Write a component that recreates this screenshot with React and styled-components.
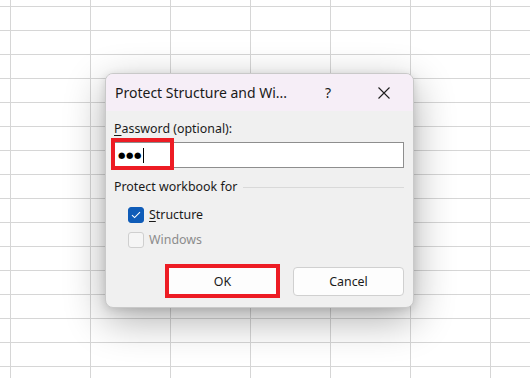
import React from "react";
import styled, { createGlobalStyle } from "styled-components";

const GlobalStyle = createGlobalStyle`
    html, body {
        margin: 0;
        padding: 0;
        background: #ffffff;
    }
    body {
        font-family: "Noto Sans", "Open Sans", sans-serif;
        color: #1b1b1b;
    }
`;

const App = () => {
    return (
        <Sheet>
            <GlobalStyle />
            <Dialog>
                <TitleBar>
                    <Title>Protect Structure and Wi...</Title>
                    <HelpButton>?</HelpButton>
                    <CloseButton>
                        <svg width="12" height="12" viewBox="0 0 12 12">
                            <path
                                d="M0.5 0.5 L11.5 11.5 M11.5 0.5 L0.5 11.5"
                                stroke="#1f1f1f"
                                strokeWidth="1.1"
                                fill="none"
                            />
                        </svg>
                    </CloseButton>
                </TitleBar>
                <Body>
                    <Label>
                        <u>P</u>assword (optional):
                    </Label>
                    <InputWrap>
                        <PasswordInput>
                            <Dots>●●●</Dots>
                            <Caret />
                        </PasswordInput>
                        <Highlight />
                    </InputWrap>
                    <Group>
                        <GroupTitle>Protect workbook for</GroupTitle>
                        <GroupLine />
                    </Group>
                    <CheckRow>
                        <CheckBox checked>
                            <svg width="10" height="8" viewBox="0 0 10 8">
                                <path
                                    d="M1 4.2 L3.6 6.6 L9 1.2"
                                    stroke="#ffffff"
                                    strokeWidth="1.1"
                                    fill="none"
                                />
                            </svg>
                        </CheckBox>
                        <CheckLabel>
                            <u>S</u>tructure
                        </CheckLabel>
                    </CheckRow>
                    <CheckRow disabled>
                        <CheckBox />
                        <CheckLabel disabled>Windows</CheckLabel>
                    </CheckRow>
                    <ButtonRow>
                        <Button highlighted>OK</Button>
                        <Button>Cancel</Button>
                    </ButtonRow>
                </Body>
            </Dialog>
        </Sheet>
    );
};

const Sheet = styled.div`
    position: relative;
    width: 530px;
    height: 378px;
    overflow: hidden;
    background-color: #ffffff;
    background-image: linear-gradient(to right, #d6d6d6 1px, transparent 1px),
        linear-gradient(to bottom, #d6d6d6 1px, transparent 1px);
    background-size: 80px 24px;
    background-position: 90px 6px;
`;

const Dialog = styled.div`
    position: absolute;
    left: 105px;
    top: 73px;
    width: 307px;
    border: 1px solid #c9c9c9;
    border-radius: 8px;
    background: #f0f0f0;
    overflow: hidden;
    box-shadow: 0 12px 40px rgba(0, 0, 0, 0.32), 0 2px 8px rgba(0, 0, 0, 0.12);
`;

const TitleBar = styled.div`
    display: flex;
    align-items: center;
    height: 37px;
    background: #f6eef7;
    padding-left: 9px;
`;

const Title = styled.div`
    flex: 1;
    font-size: 14px;
    color: #1a1a1a;
    white-space: nowrap;
`;

const HelpButton = styled.div`
    width: 20px;
    margin-right: 34px;
    text-align: center;
    font-size: 14px;
    color: #1a1a1a;
`;

const CloseButton = styled.div`
    display: flex;
    align-items: center;
    justify-content: center;
    width: 24px;
    margin-right: 17px;
`;

const Body = styled.div`
    display: flex;
    flex-direction: column;
    padding: 10px 9px 9px 5px;
`;

const Label = styled.div`
    margin-left: 3px;
    font-size: 12.4px;
    line-height: 16px;
    color: #1a1a1a;
    u {
        text-decoration-thickness: 1px;
        text-underline-offset: 2px;
    }
`;

const InputWrap = styled.div`
    position: relative;
    margin-top: 5px;
`;

const PasswordInput = styled.div`
    display: flex;
    align-items: center;
    height: 24px;
    border: 1px solid #8e8e8e;
    background: #ffffff;
    padding-left: 6px;
`;

const Dots = styled.span`
    font-size: 8.5px;
    letter-spacing: 0.6px;
    color: #000000;
    font-family: "DejaVu Sans", sans-serif;
`;

const Caret = styled.span`
    display: inline-block;
    width: 1px;
    height: 15px;
    margin-left: 1px;
    background: #000000;
`;

const Highlight = styled.div`
    position: absolute;
    left: 0;
    top: -4px;
    width: 63px;
    height: 32px;
    box-sizing: border-box;
    border: 4px solid #ed1c24;
`;

const Group = styled.div`
    display: flex;
    align-items: center;
    gap: 6px;
    margin-top: 11px;
    margin-left: 3px;
`;

const GroupTitle = styled.div`
    font-size: 12.4px;
    line-height: 16px;
    color: #1a1a1a;
`;

const GroupLine = styled.div`
    flex: 1;
    height: 1px;
    background: #d9d9d9;
`;

const CheckRow = styled.div`
    display: flex;
    align-items: center;
    gap: 5px;
    margin-left: 17px;
    margin-top: ${(p) => (p.disabled ? "9px" : "12px")};
`;

const CheckBox = styled.div`
    display: flex;
    align-items: center;
    justify-content: center;
    width: 16px;
    height: 16px;
    box-sizing: border-box;
    border-radius: 3px;
    background: ${(p) => (p.checked ? "#0f5cb8" : "#f5f5f5")};
    border: 1px solid ${(p) => (p.checked ? "#0f5cb8" : "#cfcfcf")};
`;

const CheckLabel = styled.div`
    font-size: 12.4px;
    line-height: 16px;
    color: ${(p) => (p.disabled ? "#8c8c8c" : "#1a1a1a")};
    u {
        text-decoration-thickness: 1px;
        text-underline-offset: 2px;
    }
`;

const ButtonRow = styled.div`
    display: flex;
    justify-content: flex-end;
    align-items: center;
    gap: 13px;
    margin-top: 16px;
`;

const Button = styled.div`
    display: flex;
    align-items: center;
    justify-content: center;
    box-sizing: border-box;
    font-size: 12.4px;
    color: #1a1a1a;
    background: #fdfdfd;
    width: ${(p) => (p.highlighted ? "115px" : "111px")};
    height: ${(p) => (p.highlighted ? "34px" : "29px")};
    border-radius: ${(p) => (p.highlighted ? "0" : "4px")};
    border: ${(p) =>
        p.highlighted ? "4px solid #ed1c24" : "1px solid #d0d0d0"};
`;

export default App;
